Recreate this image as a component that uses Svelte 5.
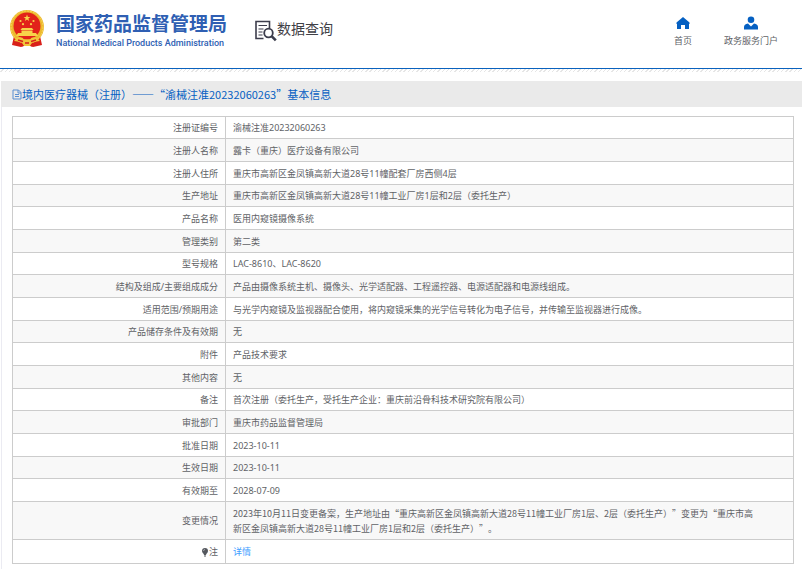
<script lang="ts">
  interface Field {
    label: string;
    value: string;
    marker?: boolean;
    link?: boolean;
  }

  const title = "境内医疗器械（注册）——“渝械注准20232060263”基本信息";

  const fields: Field[] = [
    { label: "注册证编号", value: "渝械注准20232060263" },
    { label: "注册人名称", value: "露卡（重庆）医疗设备有限公司" },
    { label: "注册人住所", value: "重庆市高新区金凤镇高新大道28号11幢配套厂房西侧4层" },
    { label: "生产地址", value: "重庆市高新区金凤镇高新大道28号11幢工业厂房1层和2层（委托生产）" },
    { label: "产品名称", value: "医用内窥镜摄像系统" },
    { label: "管理类别", value: "第二类" },
    { label: "型号规格", value: "LAC-8610、LAC-8620" },
    { label: "结构及组成/主要组成成分", value: "产品由摄像系统主机、摄像头、光学适配器、工程遥控器、电源适配器和电源线组成。" },
    { label: "适用范围/预期用途", value: "与光学内窥镜及监视器配合使用，将内窥镜采集的光学信号转化为电子信号，并传输至监视器进行成像。" },
    { label: "产品储存条件及有效期", value: "无" },
    { label: "附件", value: "产品技术要求" },
    { label: "其他内容", value: "无" },
    { label: "备注", value: "首次注册（委托生产，受托生产企业：重庆前沿骨科技术研究院有限公司）" },
    { label: "审批部门", value: "重庆市药品监督管理局" },
    { label: "批准日期", value: "2023-10-11" },
    { label: "生效日期", value: "2023-10-11" },
    { label: "有效期至", value: "2028-07-09" },
    {
      label: "变更情况",
      value:
        "2023年10月11日变更备案，生产地址由“重庆高新区金凤镇高新大道28号11幢工业厂房1层、2层（委托生产）”变更为“重庆市高\n新区金凤镇高新大道28号11幢工业厂房1层和2层（委托生产）”。",
    },
    { label: "注", value: "详情", marker: true, link: true },
  ];
</script>

<div class="page" lang="zh-CN">
  <header class="header">
    <a class="brand" href="#home">
      <svg class="emblem" viewBox="0 0 36 40" aria-hidden="true">
        <path d="M5 27 L3 36 L12 38 L18 36 L24 38 L33 36 L31 27 Z" fill="#d9201a" />
        <circle cx="18" cy="18" r="17" fill="#edb92e" />
        <circle cx="18" cy="18" r="16" fill="none" stroke="#f8d65c" stroke-dasharray="2 1" />
        <circle cx="18" cy="17" r="13.5" fill="#e2231a" />
        <g fill="#f8d34a">
          <path d="M18 5.500l.9 2.400h2.500l-2 1.600.7 2.500-2.100-1.500-2.100 1.500.7-2.500-2-1.600h2.500z" />
          <circle cx="11.500" cy="12" r="1.100" />
          <circle cx="14" cy="15.200" r="1.100" />
          <circle cx="22" cy="15.200" r="1.100" />
          <circle cx="24.500" cy="12" r="1.100" />
          <path d="M13 19h10l1.500 2h-13zM12.500 21.500h11V24h3.500l2 3H7l2-3h3.500z" />
        </g>
        <path d="M8 29q5-2 7 1.500h6q2-3.500 7-1.500l3 3-7 1-3 4h-6l-3-4-7-1z" fill="#f2c63c" />
        <path d="M9 31l5 1.500M27 31l-5 1.500M12 34l2 3M24 34l-2 3M16 34h4" stroke="#d9201a" stroke-width="1.500" />
      </svg>
      <span class="brand-text">
        <span class="brand-cn">国家药品监督管理局</span>
        <span class="brand-en">National Medical Products Administration</span>
      </span>
    </a>

    <h1 class="section-name">
      <svg class="query-icon" viewBox="0 0 22 21" aria-hidden="true">
        <g fill="none" stroke="#3c3d4c">
          <path d="M8.500 18H1V1h13.500v7" stroke-width="1.600" />
          <path d="M3.500 5h8.500M3.500 8.500h5M3.500 11.500h4M3.500 14.500h4" stroke-width="1.200" />
          <circle cx="13.500" cy="12.500" r="4.300" stroke-width="1.800" />
          <path d="M16.800 15.800l4 4" stroke-width="2.600" />
        </g>
      </svg>
      <span>数据查询</span>
    </h1>

    <nav class="nav">
      <a href="#index">
        <svg viewBox="0 0 14 14" aria-hidden="true">
          <path d="M7 1L.5 6.500V8H1v5h4V9h4v4h4V8h.500V6.500z" fill="#0560c2" />
        </svg>
        <span>首页</span>
      </a>
      <a href="#portal">
        <svg viewBox="0 0 14 14" aria-hidden="true">
          <circle cx="7" cy="3.800" r="3.300" fill="#0560c2" />
          <path d="M0 13.500V11q0-3 4-3.500l3 3 3-3q4 .5 4 3.500v2.500z" fill="#0560c2" />
        </svg>
        <span>政务服务门户</span>
      </a>
    </nav>
  </header>

  <main class="content">
    <h2 class="title quoted">
      <svg viewBox="0 0 10 11" aria-hidden="true">
        <path d="M1 1h5.500L9 3.500V10H1zM6 1v3h3M3 5.500h4M3 7.500h4" fill="none" stroke="#5b8fd0" />
      </svg>
      <span>{title}</span>
    </h2>

    <div class="table-wrap">
      <table>
        <tbody>
          {#each fields as field}
            <tr>
              <th scope="row">
                {#if field.marker}
                  <svg class="marker" viewBox="0 0 8 10" aria-hidden="true">
                    <path d="M4 1a3 3 0 0 1 3 3c0 2-2 2.500-2 4H3C3 6.500 1 6 1 4a3 3 0 0 1 3-3zM3 8.500h2v1H3z" fill="#55585e" />
                    <path d="M2.500 4q0-1.500 1.500-1.500" fill="none" stroke="#b9bbc0" stroke-width=".8" />
                  </svg>
                {/if}{field.label}
              </th>
              <td class:quoted={field.value.includes("“")}>
                {#if field.link}
                  <a href="#detail">{field.value}</a>
                {:else}
                  {field.value}
                {/if}
              </td>
            </tr>
          {/each}
        </tbody>
      </table>
    </div>
  </main>
</div>

<style>
  :global(body) {
    background: #fff;
  }

  .page {
    font-family: "Noto Sans", "Noto Sans CJK SC", sans-serif;
    font-size: 9px;
    color: #606266;
    text-spacing-trim: space-all;
  }

  /* keeps “ ” and — full width */
  .quoted {
    font-family: "Noto Sans CJK SC", sans-serif;
  }

  a {
    color: inherit;
    text-decoration: none;
  }

  .header {
    display: flex;
    align-items: flex-start;
    height: 68px;
    border-bottom: 1px solid #0a62be;
  }

  .brand {
    display: flex;
    gap: 11px;
    padding: 9px 0 0 9px;
  }

  .emblem {
    width: 36px;
    height: 40px;
  }

  .brand-text {
    display: flex;
    flex-direction: column;
    padding-top: 4px;
    color: #2f5fb3;
    white-space: nowrap;
  }

  .brand-cn {
    font-size: 19px;
    font-weight: 700;
    line-height: 23px;
  }

  .brand-en {
    font-family: Roboto, sans-serif;
    font-size: 9px;
    font-weight: 500;
    line-height: 14px;
  }

  .section-name {
    display: flex;
    margin: 20px 0 0 28px;
    font-size: 14px;
    font-weight: 400;
    line-height: 18px;
    color: #3f4046;
    white-space: nowrap;
  }

  .query-icon {
    width: 22px;
    height: 22px;
  }

  .nav {
    display: flex;
    gap: 32px;
    margin-left: auto;
    padding: 16px 24px 0 0;
  }

  .nav a {
    display: flex;
    flex-direction: column;
    align-items: center;
    gap: 4px;
    line-height: 14px;
    white-space: nowrap;
  }

  .nav svg {
    width: 14px;
    height: 14px;
  }

  .content {
    position: relative;
    padding-top: 12px;
    margin-left: 1px;
  }

  /* hatched strip under the header */
  .content::before {
    content: "";
    position: absolute;
    inset: 0 0 auto -1px;
    height: 3px;
    background: repeating-linear-gradient(135deg, #fff 0 2px, #e6e6e6 2px 3px);
  }

  .title {
    display: flex;
    align-items: center;
    margin: 0;
    padding-left: 11px;
    height: 26px;
    background: #eaeaea;
    font-size: 11px;
    font-weight: 400;
    line-height: 16px;
    color: #0560c2;
  }

  .title svg {
    width: 10px;
    height: 11px;
  }

  .table-wrap {
    padding: 9px 8px 5px 10px;
    border-left: 1px solid #ebebf2;
  }

  table {
    width: 100%;
    border-collapse: collapse;
    border: 1px solid #ccc;
    table-layout: fixed;
  }

  tr {
    height: 23px;
  }

  tr:nth-child(3n + 1) {
    height: 22px;
  }

  tr:nth-child(even) {
    background: #f8f8f8;
  }

  tr:nth-last-child(2) {
    height: 38px;
  }

  tr:last-child {
    height: 24px;
  }

  th,
  td {
    border: 1px solid #ccc;
    line-height: 15px;
  }

  th {
    width: 205px;
    padding: 0 7px 0 0;
    font-weight: 400;
    text-align: right;
  }

  td {
    padding: 2px 7px;
    white-space: pre-line;
  }

  td a {
    color: #409eff;
  }

  .marker {
    width: 8px;
    height: 10px;
    vertical-align: -2px;
  }
</style>
